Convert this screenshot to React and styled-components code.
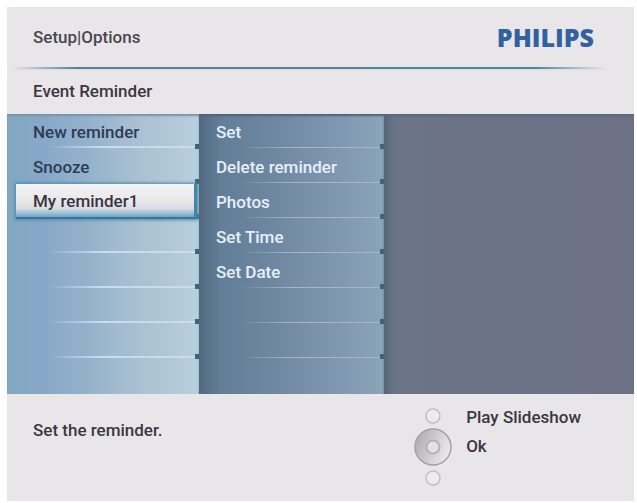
import { useState } from 'react';
import styled, { createGlobalStyle } from 'styled-components';

const reminders = ['New reminder', 'Snooze', 'My reminder1', '', '', '', '', ''];
const actions = ['Set', 'Delete reminder', 'Photos', 'Set Time', 'Set Date', '', '', ''];

const App = () => {
  const [selected, setSelected] = useState('My reminder1');

  return (
    <>
      <GlobalStyle />
      <Screen>
        <Header>
          <Path>Setup|Options</Path>
          <Brand>PHILIPS</Brand>
        </Header>
        <Rule />
        <Title>Event Reminder</Title>
        <Columns>
          <Menu aria-label="Reminders">
            {reminders.map((name, i) => (
              <Row key={i} $hideLine={name === selected || reminders[i + 1] === selected}>
                {name && (
                  <Item $active={name === selected} onClick={() => setSelected(name)}>
                    {name}
                  </Item>
                )}
              </Row>
            ))}
          </Menu>
          <Menu $dark aria-label="Reminder options">
            {actions.map((name, i) => (
              <Row key={i} $dark>
                {name && <Item $dark>{name}</Item>}
              </Row>
            ))}
          </Menu>
          <Preview />
        </Columns>
        <Footer>
          <Hint>Set the reminder.</Hint>
          <Keys>
            <Pad />
            <KeyLabels>
              <button>Play Slideshow</button>
              <button>Ok</button>
            </KeyLabels>
          </Keys>
        </Footer>
      </Screen>
    </>
  );
};

const Pad = () => (
  <svg width="40" height="84" viewBox="0 0 40 84" fill="none" aria-hidden="true">
    <defs>
      <linearGradient id="ring" x1="0" y1="0.3" x2="1" y2="0.7">
        <stop offset="0" stopColor="#aeadb2" />
        <stop offset="0.5" stopColor="#cfcdd2" />
        <stop offset="1" stopColor="#eeecf0" />
      </linearGradient>
    </defs>
    <circle cx="20" cy="11" r="7" fill="#edebee" stroke="#c0bec2" strokeWidth="1.5" />
    <circle cx="20" cy="42" r="18" fill="url(#ring)" stroke="#a3a1a6" strokeWidth="1.5" />
    <circle cx="20" cy="42" r="6.5" fill="#e3e1e5" stroke="#b4b2b7" strokeWidth="2" />
    <circle cx="20" cy="73" r="7" fill="#edebee" stroke="#c0bec2" strokeWidth="1.5" />
  </svg>
);

export default App;

const GlobalStyle = createGlobalStyle`
  * {
    box-sizing: border-box;
  }
  body {
    margin: 0;
    padding: 7px 3px 2px 7px;
    background: #fff;
    color: #3b3740;
    font: 500 17px/20px Roboto, sans-serif;
  }
  button {
    padding: 0;
    border: none;
    background: none;
    color: inherit;
    font: inherit;
    text-align: left;
    cursor: pointer;
  }
`;

const Screen = styled.main`
  display: flex;
  flex-direction: column;
  min-height: calc(100vh - 9px);
  background: #e9e6ea;
`;

const Header = styled.header`
  display: flex;
  align-items: center;
  justify-content: space-between;
  height: 60px;
  padding: 0 40px 0 26px;
`;

const Path = styled.div`
  color: #4a4650;
`;

const Brand = styled.div`
  color: #33609f;
  font: 800 25px/28px 'Open Sans', sans-serif;
`;

const Rule = styled.hr`
  align-self: stretch;
  height: 2px;
  margin: 0 28px 0 5px;
  border: none;
  background: linear-gradient(90deg, transparent, #5c7c94 11%, #55809b 88%, transparent);
  box-shadow: 0 1px 1px #cfe3ea;
`;

const Title = styled.h1`
  margin: 0;
  padding: 12px 26px 13px;
  font-size: 17px;
  font-weight: 500;
  line-height: 20px;
`;

const Columns = styled.div`
  display: grid;
  grid-template-columns: 192fr 185fr 250fr;
`;

const Menu = styled.nav`
  background: ${(p) =>
    p.$dark
      ? 'linear-gradient(90deg, #526a80, #627e98 12%, #7189a2 45%, #8299b3 80%, #8ba5b7)'
      : 'linear-gradient(90deg, #82a8c2, #88a7c8 18%, #94b2cb 42%, #a8bfd1 65%, #b9cfdd)'};
  box-shadow: inset 0 2px 2px ${(p) => (p.$dark ? '#4f6379' : '#7993ac')};
`;

const Row = styled.div`
  display: flex;
  height: 35px;
  background:
    linear-gradient(#44607a, #44607a) right bottom / 4px 5px no-repeat,
    linear-gradient(
        90deg,
        transparent 22%,
        ${(p) => (p.$hideLine ? 'transparent' : p.$dark ? '#a3b5c9' : '#c9dcec')} 50%
      )
      left bottom 1px / 98% ${(p) => (p.$dark ? '1px' : '2px')} no-repeat;

  &:last-child {
    background: none;
  }
`;

const Item = styled.button`
  flex: 1;
  padding-left: ${(p) => (p.$dark ? '17px' : '26px')};
  color: ${(p) => (p.$dark ? '#e6f0f8' : '#2c3c55')};

  ${(p) =>
    p.$active &&
    `
    margin: 0 2px 0 9px;
    padding-left: 17px;
    border-right: 3px solid #3f87ab;
    border-bottom: 2px solid #3478a0;
    background: linear-gradient(#f2f4f6, #e9e5e9 55%, #d5dce4 75%, #6ca5c4);
    color: #39353e;
    box-shadow: 0 0 3px 1px #4f87a8;
  `}
`;

const Preview = styled.section`
  background: linear-gradient(90deg, #53667a, #6c7488 4%, #6c7186);
  box-shadow: inset 0 2px 2px #5c687c;
`;

const Footer = styled.footer`
  display: flex;
  flex: 1;
  align-items: flex-start;
  justify-content: space-between;
  padding: 11px 53px 0 26px;
`;

const Hint = styled.p`
  margin: 0;
  padding-top: 15px;
`;

const Keys = styled.div`
  display: flex;
  gap: 13px;
`;

const KeyLabels = styled.div`
  display: flex;
  flex-direction: column;
  align-items: flex-start;
  gap: 9px;
  padding-top: 2px;
`;
